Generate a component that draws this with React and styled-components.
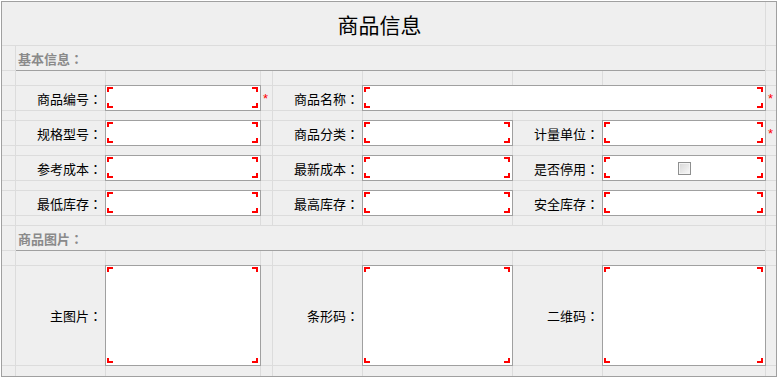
import React from 'react'
import styled, { createGlobalStyle } from 'styled-components'

const GlobalStyle = createGlobalStyle`
  html, body {
    margin: 0;
    padding: 0;
    background: #fff;
  }
  body {
    font-family: "Noto Sans CJK SC", "Noto Sans", sans-serif;
    color: #000;
  }
`

// track sizes between the 1px grid lines
const COLS = '13px 89px 154px 11px 89px 149px 89px 162px 10px'
const ROWS = '43px 24px 14px 24px 9px 24px 9px 24px 9px 24px 9px 24px 14px 99px 10px'

const Frame = styled.div`
  box-sizing: border-box;
  width: 776px;
  height: 376px;
  margin: 1px 0 0 1px;
  border: 1px solid #a0a0a0;
  display: grid;
  grid-template-columns: ${COLS};
  grid-template-rows: ${ROWS};
  gap: 1px;
  background: #dcdcdc;
`

const Cell = styled.div`
  background: #efefef;
  grid-column: span ${p => p.$span || 1};
  min-width: 0;
`

const Title = styled(Cell)`
  display: flex;
  align-items: center;
  justify-content: center;
  font-size: 21px;
  padding: 0 8px 0 0;
`

const Section = styled(Cell)`
  display: flex;
  align-items: center;
  padding-left: 2px;
  font-size: 13px;
  font-weight: bold;
  color: #8a8a8a;
  box-shadow: 0 1px 0 #a0a0a0;
`

const Label = styled(Cell)`
  display: flex;
  align-items: center;
  justify-content: flex-end;
  padding-right: 3px;
  font-size: 13px;
`

// centred full-width colon, as in the original form
const Colon = styled.span`
  font-family: "Noto Sans CJK TC", "Noto Sans CJK SC", sans-serif;
`

const Star = styled(Cell)`
  display: flex;
  align-items: center;
  padding-left: 2px;
  font-family: "Liberation Sans", Arial, sans-serif;
  font-size: 13px;
  color: #f00;
`

const red = 'linear-gradient(#f00, #f00)'

const Field = styled(Cell)`
  display: flex;
  align-items: center;
  justify-content: center;
  outline: 1px solid #a0a0a0;
  background:
    ${red} left 1px top 1px / 6px 2px no-repeat,
    ${red} left 1px top 1px / 2px 5px no-repeat,
    ${red} right 2px top 1px / 6px 2px no-repeat,
    ${red} right 2px top 1px / 2px 5px no-repeat,
    ${red} left 1px bottom 2px / 6px 2px no-repeat,
    ${red} left 1px bottom 2px / 2px 5px no-repeat,
    ${red} right 2px bottom 2px / 6px 2px no-repeat,
    ${red} right 2px bottom 2px / 2px 5px no-repeat,
    #fff;
`

const Check = styled.input`
  appearance: none;
  margin: 0;
  width: 13px;
  height: 13px;
  box-sizing: border-box;
  border: 1px solid #8e8f8f;
  background: linear-gradient(135deg, #d6d6d6 0%, #f9f9f9 100%);
  box-shadow: inset 0 0 0 1px #f4f4f4;
`

const Spacer = () => Array.from({ length: 9 }, (_, i) => <Cell key={i} />)

const Name = ({ children }) => (
  <Label>
    {children}
    <Colon>：</Colon>
  </Label>
)

const Heading = ({ children }) => (
  <Section $span={7}>
    {children}
    <Colon>：</Colon>
  </Section>
)

export default function App() {
  return (
    <>
      <GlobalStyle />
      <Frame>
        <Title $span={8}>商品信息</Title>
        <Cell />

        <Cell />
        <Heading>基本信息</Heading>
        <Cell />
        <Spacer />

        <Cell />
        <Name>商品编号</Name>
        <Field />
        <Star>*</Star>
        <Name>商品名称</Name>
        <Field $span={3} />
        <Star>*</Star>
        <Spacer />

        <Cell />
        <Name>规格型号</Name>
        <Field />
        <Cell />
        <Name>商品分类</Name>
        <Field />
        <Name>计量单位</Name>
        <Field />
        <Star>*</Star>
        <Spacer />

        <Cell />
        <Name>参考成本</Name>
        <Field />
        <Cell />
        <Name>最新成本</Name>
        <Field />
        <Name>是否停用</Name>
        <Field>
          <Check type="checkbox" />
        </Field>
        <Cell />
        <Spacer />

        <Cell />
        <Name>最低库存</Name>
        <Field />
        <Cell />
        <Name>最高库存</Name>
        <Field />
        <Name>安全库存</Name>
        <Field />
        <Cell />
        <Spacer />

        <Cell />
        <Heading>商品图片</Heading>
        <Cell />
        <Spacer />

        <Cell />
        <Name>主图片</Name>
        <Field />
        <Cell />
        <Name>条形码</Name>
        <Field />
        <Name>二维码</Name>
        <Field />
        <Cell />
        <Spacer />
      </Frame>
    </>
  )
}
